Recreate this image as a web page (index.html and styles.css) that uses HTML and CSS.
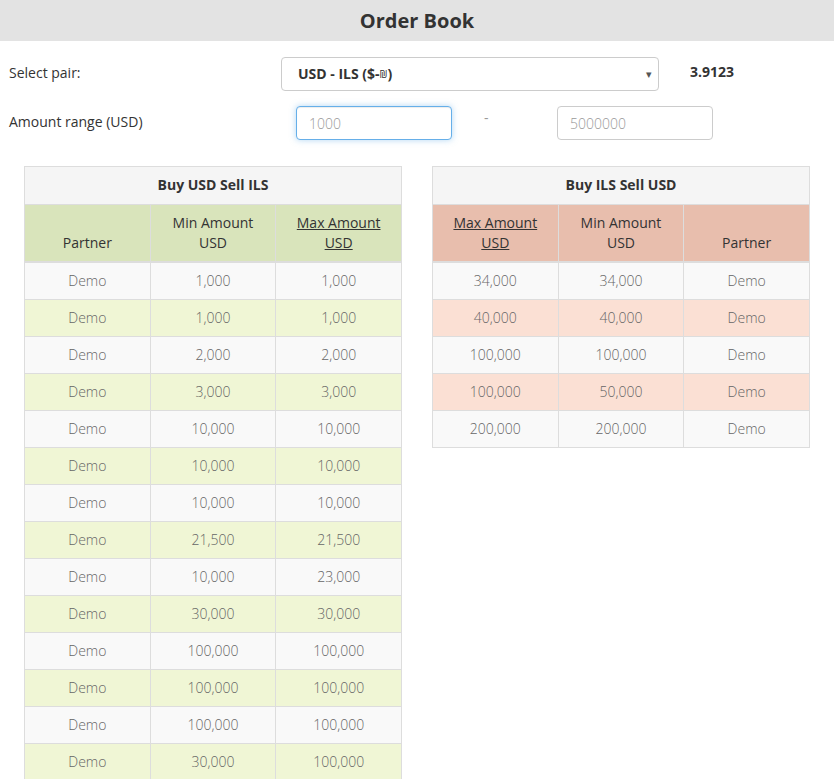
FILE: index.html
```html
<!DOCTYPE html>
<html>
<head>
<meta charset="utf-8">
<link rel="stylesheet" href="styles.css">
</head>
<body>
<header class="topbar"><h1 class="title">Order Book</h1></header>
<section class="form">
  <div class="form-row">
    <label class="label">Select pair:</label>
    <div class="select">
      <span class="select-text">USD - ILS ($-<span class="shekel">₪</span>)</span>
      <span class="select-arrow">▾</span>
    </div>
    <span class="rate">3.9123</span>
  </div>
  <div class="form-row">
    <label class="label">Amount range (USD)</label>
    <div class="range">
      <input class="input input-focus" placeholder="1000">
      <span class="dash">-</span>
      <input class="input" placeholder="5000000">
    </div>
  </div>
</section>
<main class="books">
  <table class="book book-buy">
    <thead>
      <tr><th class="book-title" colspan="3">Buy USD Sell ILS</th></tr>
      <tr class="head"><th>Partner</th><th>Min Amount<br>USD</th><th><a class="sort">Max Amount<br>USD</a></th></tr>
    </thead>
    <tbody>
      <tr><td>Demo</td><td>1,000</td><td>1,000</td></tr>
      <tr><td>Demo</td><td>1,000</td><td>1,000</td></tr>
      <tr><td>Demo</td><td>2,000</td><td>2,000</td></tr>
      <tr><td>Demo</td><td>3,000</td><td>3,000</td></tr>
      <tr><td>Demo</td><td>10,000</td><td>10,000</td></tr>
      <tr><td>Demo</td><td>10,000</td><td>10,000</td></tr>
      <tr><td>Demo</td><td>10,000</td><td>10,000</td></tr>
      <tr><td>Demo</td><td>21,500</td><td>21,500</td></tr>
      <tr><td>Demo</td><td>10,000</td><td>23,000</td></tr>
      <tr><td>Demo</td><td>30,000</td><td>30,000</td></tr>
      <tr><td>Demo</td><td>100,000</td><td>100,000</td></tr>
      <tr><td>Demo</td><td>100,000</td><td>100,000</td></tr>
      <tr><td>Demo</td><td>100,000</td><td>100,000</td></tr>
      <tr><td>Demo</td><td>30,000</td><td>100,000</td></tr>
    </tbody>
  </table>
  <table class="book book-sell">
    <thead>
      <tr><th class="book-title" colspan="3">Buy ILS Sell USD</th></tr>
      <tr class="head"><th><a class="sort">Max Amount<br>USD</a></th><th>Min Amount<br>USD</th><th>Partner</th></tr>
    </thead>
    <tbody>
      <tr><td>34,000</td><td>34,000</td><td>Demo</td></tr>
      <tr><td>40,000</td><td>40,000</td><td>Demo</td></tr>
      <tr><td>100,000</td><td>100,000</td><td>Demo</td></tr>
      <tr><td>100,000</td><td>50,000</td><td>Demo</td></tr>
      <tr><td>200,000</td><td>200,000</td><td>Demo</td></tr>
    </tbody>
  </table>
</main>
</body>
</html>
```
FILE: styles.css
```css
* { box-sizing: border-box; }
body {
  margin: 0;
  font-family: "Open Sans", "Noto Sans", sans-serif;
  font-size: 14px;
  line-height: 20px;
  color: #333;
  background: #fff;
}
.topbar {
  background: #e3e3e3;
  height: 41px;
  display: flex;
  align-items: center;
  justify-content: center;
}
.title {
  margin: 0;
  font-size: 20px;
  font-weight: 700;
  color: #333;
}
.form {
  padding: 16px 0 0 9px;
  display: flex;
  flex-direction: column;
  gap: 15px;
}
.form-row {
  display: flex;
  align-items: center;
  height: 34px;
}
.label {
  width: 272px;
  font-size: 14px;
  margin-top: -3px;
}
.select {
  width: 378px;
  height: 34px;
  border: 1px solid #ccc;
  border-radius: 4px;
  display: flex;
  align-items: center;
  justify-content: space-between;
  padding: 0 6px 0 16px;
  font-weight: 700;
}
.shekel {
  font-size: 10px;
  font-weight: 400;
  vertical-align: 1px;
}
.select-arrow {
  font-size: 11px;
  color: #555;
  font-weight: 400;
}
.rate {
  margin-left: 31px;
  font-weight: 700;
  margin-top: -4px;
}
.range {
  display: flex;
  align-items: center;
  padding-left: 15px;
}
.input {
  width: 156px;
  height: 34px;
  border: 1px solid #ccc;
  border-radius: 4px;
  padding: 6px 12px;
  font-family: inherit;
  font-size: 14px;
  color: #555;
  outline: none;
}
.input::placeholder { color: #999; font-weight: 300; }
.input-focus {
  border-color: #66afe9;
  box-shadow: inset 0 1px 1px rgba(0,0,0,.075), 0 0 6px rgba(102,175,233,.5);
}
.dash {
  width: 105px;
  padding-left: 32px;
  color: #999;
  margin-top: -10px;
}
.books {
  display: grid;
  grid-template-columns: 378px 378px;
  gap: 30px;
  padding: 26px 24px 0;
  align-items: start;
}
.book {
  width: 378px;
  border-collapse: collapse;
  border: 1px solid #ddd;
  table-layout: fixed;
}
.book th, .book td {
  border: 1px solid #ddd;
  padding: 8px;
  text-align: center;
  line-height: 20px;
}
.book .book-title {
  background: #f5f5f5;
  font-weight: 700;
  padding: 8px 8px 9px;
}
.head th {
  font-weight: 400;
  vertical-align: bottom;
  border-bottom: 2px solid #ddd;
}
.sort { color: #333; text-decoration: underline; }
.book td {
  font-weight: 300;
  color: #666;
  background: #f9f9f9;
}
.book-buy .head th { background: #d9e4bb; }
.book-buy tbody tr:nth-child(even) td { background: #f0f6d5; }
.book-sell .head th { background: #e8bead; }
.book-sell tbody tr:nth-child(even) td { background: #fbe0d4; }
```
